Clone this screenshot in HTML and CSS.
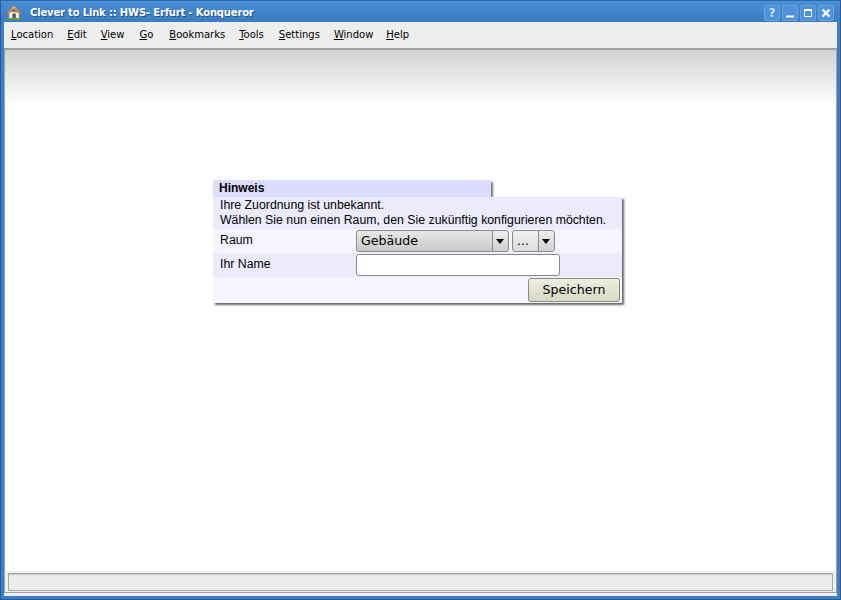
FILE: index.html
```html
<!DOCTYPE html>
<html lang="de">
<head>
<meta charset="utf-8">
<title>Clever to Link :: HWS- Erfurt - Konqueror</title>
<link rel="stylesheet" href="styles.css">
</head>
<body>
<div class="window">
  <header class="titlebar">
    <svg class="app-icon" width="16" height="16" viewBox="0 0 16 16">
      <rect x="3" y="7" width="10" height="6.5" fill="#f6f1e4" stroke="#a89c84" stroke-width=".5"/>
      <rect x="6.5" y="8.5" width="3.2" height="5" fill="#6b4a2a"/>
      <path d="M.5 8.4 7.2 1.2h1.6l6.7 7.2-1.2 1L8 4 1.7 9.4z" fill="#dc9040" stroke="#a4602a" stroke-width=".5"/>
      <path d="M5 3.6 7.4 1.4h1.2L11 3.6 8 2.8z" fill="#eab878"/>
      <path d="M.8 13.2h14.4v1.6H.8z" fill="#5aa838"/>
    </svg>
    <span class="title">Clever to Link :: HWS- Erfurt - Konqueror</span>
    <div class="win-buttons">
      <span class="win-btn win-help">?</span>
      <span class="win-btn">
        <svg width="16" height="16" viewBox="0 0 16 16"><path d="M4 10.5h8v2H4z" fill="#fff"/></svg>
      </span>
      <span class="win-btn">
        <svg width="16" height="16" viewBox="0 0 16 16"><path d="M4.5 4.5h7v7h-7z" fill="none" stroke="#fff" stroke-width="1"/><path d="M4 4h8v2H4z" fill="#fff"/></svg>
      </span>
      <span class="win-btn">
        <svg width="16" height="16" viewBox="0 0 16 16"><path d="M4.5 4.5l7 7M11.5 4.5l-7 7" stroke="#fff" stroke-width="2.4"/></svg>
      </span>
    </div>
  </header>
  <nav class="menubar">
    <span class="menu"><u>L</u>ocation</span>
    <span class="menu"><u>E</u>dit</span>
    <span class="menu"><u>V</u>iew</span>
    <span class="menu menu-wide"><u>G</u>o</span>
    <span class="menu menu-wider"><u>B</u>ookmarks</span>
    <span class="menu"><u>T</u>ools</span>
    <span class="menu menu-wide"><u>S</u>ettings</span>
    <span class="menu"><u>W</u>indow</span>
    <span class="menu menu-narrow"><u>H</u>elp</span>
  </nav>
  <main class="viewport">
    <section class="dialog">
      <h1 class="dialog-tab">Hinweis</h1>
      <div class="dialog-body">
        <p class="notice">Ihre Zuordnung ist unbekannt.<br>Wählen Sie nun einen Raum, den Sie zukünftig konfigurieren möchten.</p>
        <div class="row row-light">
          <span class="label">Raum</span>
          <div class="combo combo-wide"><span class="combo-text">Gebäude</span><span class="combo-arrow"></span></div>
          <div class="combo combo-small"><span class="combo-text">...</span><span class="combo-arrow"></span></div>
        </div>
        <div class="row row-dark">
          <span class="label">Ihr Name</span>
          <input class="text-input" type="text">
        </div>
        <div class="row-actions"><button class="save" type="button">Speichern</button></div>
      </div>
    </section>
  </main>
  <footer class="statusarea"><div class="status-frame"><div class="statusbar"></div></div></footer>
</div>
</body>
</html>
```
FILE: styles.css
```css
* { box-sizing: border-box; }
html, body { margin: 0; height: 100%; overflow: hidden; }
.window {
  width: 841px; height: 600px;
  display: flex; flex-direction: column;
  background: #3a7fc8;
  border: 1px solid #2a5a94;
  border-top-color: #2f66a8;
  padding: 0 3px 3px 3px;
  font-family: "DejaVu Sans", sans-serif;
}
.titlebar {
  height: 21px;
  margin: 0 -3px;
  padding: 2px 6px 0 5px;
  display: flex; align-items: center;
  background: linear-gradient(#4a90d8, #4285cc 50%, #3a7cc4);
  flex: none;
}
.app-icon { flex: none; margin-right: 8px; }
.title { color: #fff; font-weight: bold; font-size: 10px; letter-spacing: -0.17px; text-shadow: 1px 1px 0 #27568f; white-space: nowrap; }
.win-buttons { margin-left: auto; display: flex; gap: 2px; }
.win-btn {
  width: 16px; height: 16px;
  display: flex; align-items: center; justify-content: center;
  border: 1px solid #6aa2dc; border-radius: 2px;
  background: #4f92d8;
  color: #fff; font-size: 12px; font-weight: bold;
}
.win-btn svg { flex: none; margin: -1px; }
.win-help { color: #cfe0f4; }
.menubar {
  height: 26px; flex: none;
  background: #eeeeee;
  display: flex; align-items: center;
  padding: 0 0 2px 7px; gap: 14px;
  font-size: 10px; color: #000;
}
.menu-wide { margin-left: 1px; }
.menu-wider { margin-left: 2px; }
.menu-narrow { margin-left: -1px; }
.viewport {
  flex: 1; min-height: 0;
  border-top: 2px solid #a0a0a0;
  border-left: 1px solid #a0a0a0;
  border-right: 1px solid #a0a0a0;
  background: linear-gradient(#d2d2d2, #ffffff 57px) no-repeat #fff;
  padding: 130px 0 0 208px;
}
.dialog { width: 409px; font-family: "Liberation Sans", sans-serif; font-size: 12.3px; color: #000; }
.dialog-tab {
  margin: 0; width: 278px; height: 17px;
  background: #dcdcfc;
  font-size: 12px; font-weight: bold; line-height: 16px;
  padding-left: 6px;
  box-shadow: 2px 2px 2px #777;
}
.dialog-body { position: relative; background: #f5f5ff; box-shadow: 2px 2px 2px #666; }
.notice { margin: 0; padding: 1px 7px 2px; background: #ebebfc; line-height: 15px; height: 32px; }
.row { display: flex; align-items: center; height: 24px; padding-left: 7px; }
.row-light { background: #f5f5ff; }
.row-dark { background: #ebebfc; }
.label { width: 136px; flex: none; position: relative; top: -1px; }
.combo {
  height: 22px; display: flex;
  border: 1px solid #8a8a8a; border-radius: 3px;
  background: linear-gradient(#e8e8e8, #c8c8c8);
  font-family: "DejaVu Sans", sans-serif; font-size: 12.6px;
}
.combo-wide { width: 153px; margin-right: 3px; }
.combo-small { width: 43px; background: linear-gradient(#f0f0f0, #dcdcdc); }
.combo-text { flex: 1; padding-left: 4px; line-height: 20px; border-right: 1px solid #8a8a8a; }
.combo-arrow { width: 15px; flex: none; position: relative; background: linear-gradient(#eeeeee, #d0d0d0); border-radius: 0 3px 3px 0; }
.combo-arrow::after {
  content: ""; position: absolute; left: 3px; top: 8px;
  border: 4px solid transparent; border-top: 5px solid #000; border-bottom: 0;
}
.text-input { width: 204px; height: 22px; border: 1px solid #8a8a8a; border-radius: 3px; background: #fff; padding: 0; margin: 0; }
.row-actions { height: 26px; display: flex; justify-content: flex-end; padding: 1px 2px 0 0; }
.save {
  width: 92px; height: 24px; padding: 0 0 2px;
  border: 1px solid #8a8a7a; border-radius: 3px;
  background: linear-gradient(#eeeee2, #d8d8c4);
  font-family: "DejaVu Sans", sans-serif; font-size: 12.6px; color: #000;
}
.statusarea {
  height: 25px; flex: none;
  background: #eeeeee;
  padding-bottom: 3px;
}
.status-frame {
  height: 22px;
  border: 1px solid #a0a0a0; border-top: 0;
  padding: 2px 3px 1px 3px;
}
.statusbar { height: 18px; border: 1px solid #a8a8a8; box-shadow: inset 0 1px 0 #c8c8c8; background: #ececec; }
```
